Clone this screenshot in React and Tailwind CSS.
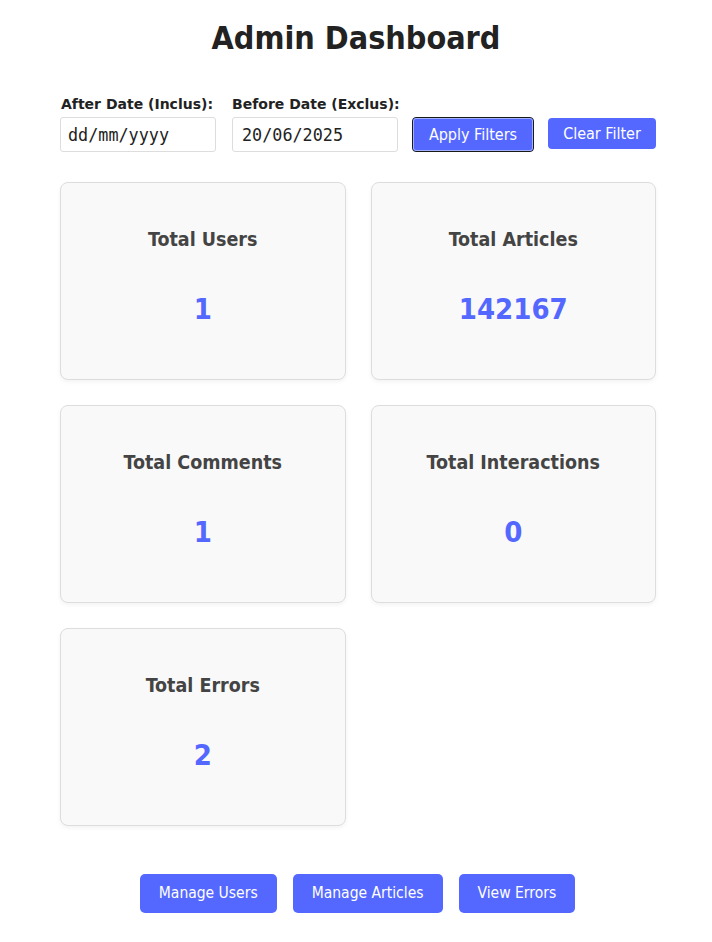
import React from 'react'

const stats = [
  { label: 'Total Users', value: '1' },
  { label: 'Total Articles', value: '142167' },
  { label: 'Total Comments', value: '1' },
  { label: 'Total Interactions', value: '0' },
  { label: 'Total Errors', value: '2' },
]

const StatCard = ({ label, value }) => (
  <div className="h-[198px] bg-[#f9f9f9] border border-[#dddddd] rounded-lg shadow-[0_2px_4px_rgba(0,0,0,0.05)] flex flex-col items-center pt-[45px] font-['DejaVu_Sans_Condensed','DejaVu_Sans',sans-serif]">
    <h3 className="text-[19.5px] font-bold text-[#444444] leading-[24px]">{label}</h3>
    <p className="mt-[39px] text-[29px] font-bold text-[#5468ff] leading-[36px]">{value}</p>
  </div>
)

const App = () => {
  return (
    <div className="min-h-[942px] bg-white font-['DejaVu_Sans',Verdana,sans-serif] text-[#222222]">
      <div className="pt-[19px]">
        <h1 className="text-center text-[32px] font-bold leading-[38px] text-[#222222] font-['DejaVu_Sans_Condensed','DejaVu_Sans',sans-serif]">
          Admin Dashboard
        </h1>
      </div>

      <div className="w-[596px] ml-[60px]">
        {/* Filters */}
        <div className="flex items-end mt-[39px]">
          <div className="flex flex-col w-[156px]">
            <label className="text-[14px] font-bold leading-[17px] ml-[1px] mb-[4px] whitespace-nowrap">After Date (Inclus):</label>
            <input
              type="text"
              placeholder="dd/mm/yyyy"
              className="w-[156px] h-[35px] px-[7px] border border-[#dddddd] rounded-[3px] font-['DejaVu_Sans_Mono',monospace] text-[16.8px] text-[#222222] placeholder:text-[#222222] outline-none"
            />
          </div>
          <div className="flex flex-col w-[166px] ml-[16px]">
            <label className="text-[14px] font-bold leading-[17px] mb-[4px] whitespace-nowrap">Before Date (Exclus):</label>
            <input
              type="text"
              defaultValue="20/06/2025"
              className="w-[166px] h-[35px] px-[9px] border border-[#dddddd] rounded-[3px] font-['DejaVu_Sans_Mono',monospace] text-[16.8px] text-[#222222] outline-none"
            />
          </div>
          <button className="ml-[14px] w-[122px] h-[35px] bg-[#5468ff] text-white text-[16px] font-['DejaVu_Sans_Condensed','DejaVu_Sans',sans-serif] rounded-[4px] border border-[#1a1a1a] outline outline-1 outline-[#9fb0ff] outline-offset-[-2px]">
            Apply Filters
          </button>
          <button className="ml-[14px] mb-[3px] w-[108px] h-[31px] bg-[#5468ff] text-white text-[16px] font-['DejaVu_Sans_Condensed','DejaVu_Sans',sans-serif] rounded-[4px]">
            Clear Filter
          </button>
        </div>

        {/* Stat cards */}
        <div className="grid grid-cols-2 gap-x-[25px] gap-y-[25px] mt-[30px]">
          {stats.map((s) => (
            <StatCard key={s.label} {...s} />
          ))}
        </div>
      </div>

      {/* Nav buttons */}
      <div className="flex justify-center gap-[16px] mt-[48px] pl-[3px] font-['DejaVu_Sans_Condensed','DejaVu_Sans',sans-serif]">
        <button className="h-[39px] px-[19px] bg-[#5468ff] text-white text-[15.5px] rounded-[5px]">Manage Users</button>
        <button className="h-[39px] px-[19px] bg-[#5468ff] text-white text-[15.5px] rounded-[5px]">Manage Articles</button>
        <button className="h-[39px] px-[19px] bg-[#5468ff] text-white text-[15.5px] rounded-[5px]">View Errors</button>
      </div>
    </div>
  )
}

export default App
